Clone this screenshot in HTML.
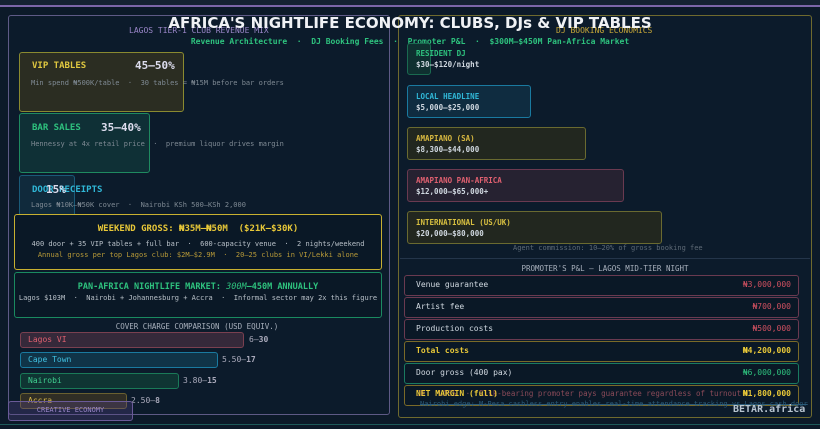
<!DOCTYPE html>
<html><head><meta charset="utf-8"><style>
*{margin:0;padding:0;box-sizing:border-box}
body{width:820px;height:429px;background:#0c1a29;position:relative;overflow:hidden;font-family:"DejaVu Sans Mono","Liberation Mono",monospace;color:#c8d0d8}
.a{position:absolute;white-space:nowrap}
.b{position:absolute;border:1px solid;border-radius:3px}
.t{font-size:8px}
.s{font-size:7px;color:#7f8a94}
</style></head><body>
<div class="a" style="left:0;top:0;width:820px;height:5px;background:#152232"></div>
<div class="a" style="left:0;top:5px;width:820px;height:2px;background:#7c66a8"></div>
<div class="b" style="left:8px;top:15px;width:382px;height:400px;border-color:#5e5a86;background:#0c1b2b"></div>
<div class="b" style="left:398px;top:15px;width:414px;height:403px;border-color:#6f6a2e;background:#0c1b2b"></div>
<div class="a" style="left:0;top:424px;width:820px;height:1px;background:#1d5a5a"></div>

<div class="a t" style="left:129px;top:26px;color:#9a86c8">LAGOS TIER-1 CLUB REVENUE MIX</div>
<div class="a t" style="left:556px;top:26px;color:#c8a838">DJ BOOKING ECONOMICS</div>
<div class="a" style="left:0;width:820px;top:14px;text-align:center;font:bold 15px 'DejaVu Sans',sans-serif;color:#f0f2f5">AFRICA'S NIGHTLIFE ECONOMY: CLUBS, DJs &amp; VIP TABLES</div>
<div class="a" style="left:0;width:820px;top:37px;text-align:center;font-size:8px;font-weight:bold;color:#2ec27e">Revenue Architecture &nbsp;·&nbsp; DJ Booking Fees &nbsp;·&nbsp; Promoter P&amp;L &nbsp;·&nbsp; $300M–$450M Pan-Africa Market</div>

<div class="b" style="left:19px;top:52px;width:165px;height:60px;border-color:#8a8a30;background:#2b2d22"></div>
<div class="a" style="left:32px;top:61px;font-size:9px;font-weight:bold;color:#e0c840">VIP TABLES</div>
<div class="a" style="left:135px;top:59px;font-size:11px;font-weight:bold;color:#dde">45–50%</div>
<div class="a s" style="left:31px;top:79px">Min spend ₦500K/table &nbsp;·&nbsp; 30 tables = ₦15M before bar orders</div>

<div class="b" style="left:19px;top:113px;width:131px;height:60px;border-color:#1f8a60;background:#0f3036"></div>
<div class="a" style="left:32px;top:123px;font-size:9px;font-weight:bold;color:#2ec27e">BAR SALES</div>
<div class="a" style="left:101px;top:121px;font-size:11px;font-weight:bold;color:#dde">35–40%</div>
<div class="a s" style="left:31px;top:140px">Hennessy at 4x retail price &nbsp;·&nbsp; premium liquor drives margin</div>

<div class="b" style="left:19px;top:175px;width:56px;height:60px;border-color:#1a5a78;background:#102a3c"></div>
<div class="a" style="left:32px;top:185px;font-size:9px;font-weight:bold;color:#30b8d8">DOOR RECEIPTS</div>
<div class="a" style="left:46px;top:183px;font-size:11px;font-weight:bold;color:#dde">15%</div>
<div class="a s" style="left:31px;top:201px">Lagos ₦10K–₦50K cover &nbsp;·&nbsp; Nairobi KSh 500–KSh 2,000</div>

<div class="b" style="left:14px;top:214px;width:368px;height:56px;border-color:#c8b030;background:#0a1826"></div>
<div class="a" style="left:14px;width:368px;text-align:center;top:224px;font-size:9px;font-weight:bold;color:#e8c838">WEEKEND GROSS: ₦35M–₦50M &nbsp;($21K–$30K)</div>
<div class="a" style="left:14px;width:368px;text-align:center;top:240px;font-size:7px;color:#b8c0c8">400 door + 35 VIP tables + full bar &nbsp;·&nbsp; 600-capacity venue &nbsp;·&nbsp; 2 nights/weekend</div>
<div class="a" style="left:14px;width:368px;text-align:center;top:251px;font-size:7px;color:#b89a38">Annual gross per top Lagos club: $2M–$2.9M &nbsp;·&nbsp; 20–25 clubs in VI/Lekki alone</div>

<div class="b" style="left:14px;top:272px;width:368px;height:46px;border-color:#1a8a60;background:#0a1826"></div>
<div class="a" style="left:14px;width:368px;text-align:center;top:282px;font-size:8.5px;font-weight:bold;color:#2ec27e">PAN-AFRICA NIGHTLIFE MARKET: <span style="font-weight:normal;font-style:italic">300M</span>–450M ANNUALLY</div>
<div class="a" style="left:14px;width:368px;text-align:center;top:294px;font-size:7px;color:#b8c0c8">Lagos $103M &nbsp;·&nbsp; Nairobi + Johannesburg + Accra &nbsp;·&nbsp; Informal sector may 2x this figure</div>

<div class="a t" style="left:0;width:394px;text-align:center;top:322px;font-size:7.5px;color:#a8b0bc">COVER CHARGE COMPARISON (USD EQUIV.)</div>
<div class="b" style="left:20px;top:332px;width:224px;height:16px;border-color:#7a4050;background:#35293a"></div>
<div class="a t" style="left:28px;top:335px;color:#e06070">Lagos VI</div>
<div class="a t" style="left:249px;top:335px;color:#aab">6–<b>30</b></div>
<div class="b" style="left:20px;top:352px;width:198px;height:16px;border-color:#1a7aa0;background:#103448"></div>
<div class="a t" style="left:28px;top:355px;color:#40c0e0">Cape Town</div>
<div class="a t" style="left:222px;top:355px;color:#aab">5.50–<b>17</b></div>
<div class="b" style="left:20px;top:373px;width:159px;height:16px;border-color:#1a7a58;background:#0f3533"></div>
<div class="a t" style="left:28px;top:376px;color:#40d090">Nairobi</div>
<div class="a t" style="left:183px;top:376px;color:#aab">3.80–<b>15</b></div>
<div class="b" style="left:20px;top:393px;width:107px;height:16px;border-color:#6a6030;background:#302e25"></div>
<div class="a t" style="left:28px;top:396px;color:#d8b848">Accra</div>
<div class="a t" style="left:131px;top:396px;color:#aab">2.50–<b>8</b></div>
<div class="b" style="left:8px;top:401px;width:125px;height:20px;border-color:#6a5a98;background:rgba(90,70,140,0.3)"></div>
<div class="a" style="left:8px;width:125px;text-align:center;top:406px;font-size:7px;color:#9a86c8">CREATIVE ECONOMY</div>

<div class="b" style="left:407px;top:43px;width:24px;height:32px;border-color:#1a6a50;background:#0f3030"></div>
<div class="a" style="left:416px;top:49px;font-size:7.5px;font-weight:bold;color:#2ec27e">RESIDENT DJ</div>
<div class="a" style="left:416px;top:60px;font-size:7.5px;font-weight:bold;color:#d0d8e0">$30–$120/night</div>
<div class="b" style="left:407px;top:85px;width:124px;height:33px;border-color:#1a7aa0;background:#0f2c40"></div>
<div class="a" style="left:416px;top:92px;font-size:7.5px;font-weight:bold;color:#30b8d8">LOCAL HEADLINE</div>
<div class="a" style="left:416px;top:103px;font-size:7.5px;font-weight:bold;color:#d0d8e0">$5,000–$25,000</div>
<div class="b" style="left:407px;top:127px;width:179px;height:33px;border-color:#6a6a30;background:#22271f"></div>
<div class="a" style="left:416px;top:134px;font-size:7.5px;font-weight:bold;color:#d8b840">AMAPIANO (SA)</div>
<div class="a" style="left:416px;top:145px;font-size:7.5px;font-weight:bold;color:#d0d8e0">$8,300–$44,000</div>
<div class="b" style="left:407px;top:169px;width:217px;height:33px;border-color:#6a3a50;background:#262231"></div>
<div class="a" style="left:416px;top:176px;font-size:7.5px;font-weight:bold;color:#e06070">AMAPIANO PAN-AFRICA</div>
<div class="a" style="left:416px;top:187px;font-size:7.5px;font-weight:bold;color:#d0d8e0">$12,000–$65,000+</div>
<div class="b" style="left:407px;top:211px;width:255px;height:33px;border-color:#6a6a30;background:#22271f"></div>
<div class="a" style="left:416px;top:218px;font-size:7.5px;font-weight:bold;color:#d8c040">INTERNATIONAL (US/UK)</div>
<div class="a" style="left:416px;top:229px;font-size:7.5px;font-weight:bold;color:#d0d8e0">$20,000–$80,000</div>
<div class="a s" style="left:513px;top:244px;font-size:7px;color:#5e6a76">Agent commission: 10–20% of gross booking fee</div>
<div class="a" style="left:400px;top:258px;width:410px;height:1px;background:#24354a"></div>
<div class="a" style="left:400px;width:410px;text-align:center;top:264px;font-size:7.5px;color:#a8b0bc">PROMOTER'S P&amp;L — LAGOS MID-TIER NIGHT</div>

<div class="b" style="left:404px;top:275px;width:395px;height:21px;border-color:#6a3a50;background:#0a1826"></div>
<div class="a t" style="left:416px;top:280px;color:#d0d8e0">Venue guarantee</div>
<div class="a t" style="right:29px;top:280px;color:#d05060">₦3,000,000</div>
<div class="b" style="left:404px;top:297px;width:395px;height:21px;border-color:#6a3a50;background:#0a1826"></div>
<div class="a t" style="left:416px;top:302px;color:#d0d8e0">Artist fee</div>
<div class="a t" style="right:29px;top:302px;color:#d05060">₦700,000</div>
<div class="b" style="left:404px;top:319px;width:395px;height:21px;border-color:#6a3a50;background:#0a1826"></div>
<div class="a t" style="left:416px;top:324px;color:#d0d8e0">Production costs</div>
<div class="a t" style="right:29px;top:324px;color:#d05060">₦500,000</div>
<div class="b" style="left:404px;top:341px;width:395px;height:21px;border-color:#7a6a28;background:#0a1826"></div>
<div class="a t" style="left:416px;top:346px;color:#e8c838;font-weight:bold">Total costs</div>
<div class="a t" style="right:29px;top:346px;color:#e8c838;font-weight:bold">₦4,200,000</div>
<div class="b" style="left:404px;top:363px;width:395px;height:21px;border-color:#1a7a60;background:#0a1826"></div>
<div class="a t" style="left:416px;top:368px;color:#d0d8e0">Door gross (400 pax)</div>
<div class="a t" style="right:29px;top:368px;color:#2ec27e">₦6,000,000</div>
<div class="b" style="left:404px;top:385px;width:395px;height:21px;border-color:#7a6a28;background:#0a1826"></div>
<div class="a" style="left:416px;top:389px;font-size:7.5px;color:#8a4a58">OR &nbsp;&nbsp;LOSS &nbsp;·&nbsp; Risk-bearing promoter pays guarantee regardless of turnout</div>
<div class="a t" style="left:416px;top:389px;color:#e8c838;font-weight:bold">NET MARGIN (full)</div>
<div class="a t" style="right:29px;top:389px;color:#e8c838;font-weight:bold">₦1,800,000</div>
<div class="a" style="left:420px;top:400px;font-size:7px;color:#2a5a78;text-decoration:line-through">Nairobi edge: M-Pesa cashless entry enables real-time attendance tracking vs Lagos cash door</div>
<div class="a" style="left:733px;top:404px;font-size:10px;font-weight:bold;color:#b8c4d0">BETAR.africa</div>
</body></html>
